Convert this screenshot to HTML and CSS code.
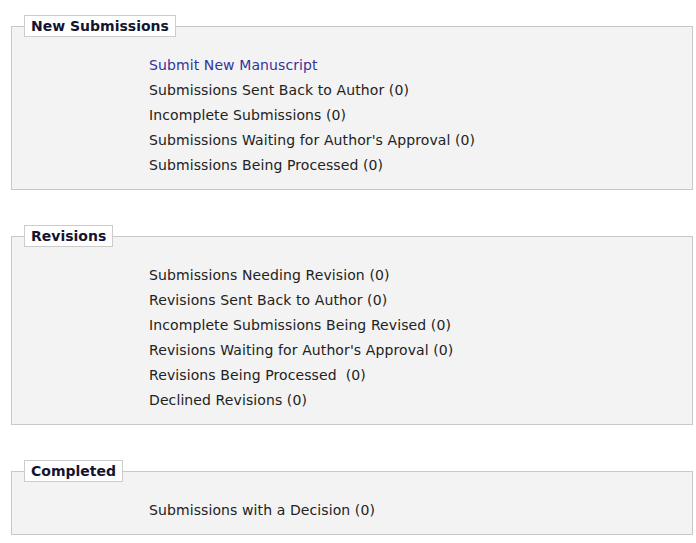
FILE: index.html
```html
<!DOCTYPE html>
<html>
<head>
<meta charset="utf-8">
<link rel="stylesheet" href="styles.css">
</head>
<body>
<div class="page">
  <fieldset class="group">
    <legend class="group-title">New Submissions</legend>
    <ul class="items">
      <li><a class="link" href="#">Submit New Manuscript</a></li>
      <li>Submissions Sent Back to Author (0)</li>
      <li>Incomplete Submissions (0)</li>
      <li>Submissions Waiting for Author's Approval (0)</li>
      <li>Submissions Being Processed (0)</li>
    </ul>
  </fieldset>
  <fieldset class="group">
    <legend class="group-title">Revisions</legend>
    <ul class="items">
      <li>Submissions Needing Revision (0)</li>
      <li>Revisions Sent Back to Author (0)</li>
      <li>Incomplete Submissions Being Revised (0)</li>
      <li>Revisions Waiting for Author's Approval (0)</li>
      <li>Revisions Being Processed &nbsp;(0)</li>
      <li>Declined Revisions (0)</li>
    </ul>
  </fieldset>
  <fieldset class="group">
    <legend class="group-title">Completed</legend>
    <ul class="items">
      <li>Submissions with a Decision (0)</li>
    </ul>
  </fieldset>
</div>
</body>
</html>
```

FILE: styles.css
```css
html, body {
  margin: 0;
  padding: 0;
  background: #ffffff;
}
body {
  font-family: "DejaVu Sans", Verdana, sans-serif;
  font-size: 14px;
  color: #222222;
}
.page {
  padding: 15px 3px 0 11px;
}
.group {
  margin: 0 0 35px 0;
  padding: 16px 12px 11px 12px;
  border: 1px solid #c8c8c8;
  background: #f3f3f3;
  min-width: 0;
}
.group-title {
  padding: 0 6px;
  border: 1px solid #cccccc;
  background: #ffffff;
  font-weight: bold;
  font-size: 14px;
  line-height: 20px;
  color: #14142e;
}
.items {
  list-style: none;
  margin: 0 0 0 125px;
  padding: 0;
}
.items li {
  line-height: 25px;
  letter-spacing: 0.1px;
}
.link {
  color: #333399;
  text-decoration: none;
}
```
